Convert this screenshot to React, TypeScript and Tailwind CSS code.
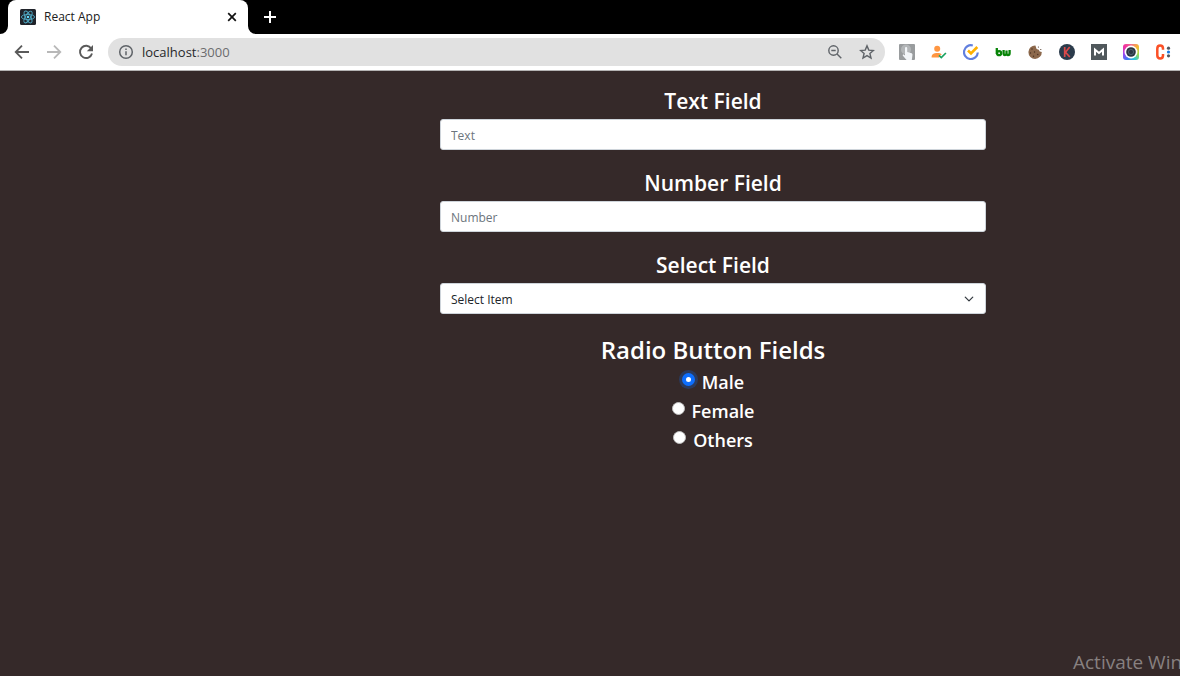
import { useState } from "react";

function ReactIcon() {
  return (
    <svg className="size-4 shrink-0" viewBox="0 0 16 16" aria-hidden="true">
      <rect width="16" height="16" rx="1.5" fill="#20232a" />
      <g fill="none" stroke="#4fa9c4" strokeWidth="0.9">
        <ellipse cx="8" cy="8" rx="6.6" ry="2.6" />
        <ellipse cx="8" cy="8" rx="6.6" ry="2.6" transform="rotate(60 8 8)" />
        <ellipse cx="8" cy="8" rx="6.6" ry="2.6" transform="rotate(120 8 8)" />
      </g>
      <circle cx="8" cy="8" r="1.3" fill="#61dafb" />
    </svg>
  );
}

function TabStrip() {
  return (
    <header className="flex h-[34px] bg-black pl-2">
      <div className="relative flex w-60 items-center rounded-t-lg bg-white pl-3 pr-2">
        <svg className="absolute bottom-0 -left-2 size-2" viewBox="0 0 8 8" aria-hidden="true">
          <path d="M8 0v8H0a8 8 0 0 0 8-8z" fill="#fff" />
        </svg>
        <svg className="absolute -right-2 bottom-0 size-2" viewBox="0 0 8 8" aria-hidden="true">
          <path d="M0 0v8h8a8 8 0 0 1-8-8z" fill="#fff" />
        </svg>
        <ReactIcon />
        <span className="ml-2 flex-1 text-xs text-[#202020]">React App</span>
        <button type="button" aria-label="Close tab" className="flex size-4 items-center justify-center">
          <svg className="size-4" viewBox="0 0 16 16" aria-hidden="true">
            <path d="M4.2 4.2l7.6 7.6M11.8 4.2l-7.6 7.6" stroke="#111" strokeWidth="1.7" />
          </svg>
        </button>
      </div>
      <button type="button" aria-label="New tab" className="ml-3 flex w-5 items-center justify-center">
        <svg className="size-4" viewBox="0 0 16 16" aria-hidden="true">
          <path d="M8 2v12M2 8h12" stroke="#fff" strokeWidth="2" />
        </svg>
      </button>
    </header>
  );
}

function Extensions() {
  return (
    <div className="flex shrink-0 items-center gap-4">
      <button type="button" aria-label="Click helper">
        <svg className="size-4" viewBox="0 0 16 16" aria-hidden="true">
          <rect width="16" height="16" rx="1" fill="#999c9e" />
          <circle cx="7" cy="5.5" r="5" fill="#b3b6b8" />
          <path d="M6 4a1.1 1.1 0 0 1 2.2 0v4l3.800 1c1 .3 1.600.8 1.500 1.800L12.800 16H7.600L3.900 11.800c-.7-1 .4-1.800 1.200-1.100l.9.8z" fill="#f2f5f8" />
        </svg>
      </button>
      <button type="button" aria-label="Contacts">
        <svg className="size-4" viewBox="0 0 16 16" aria-hidden="true">
          <circle cx="6.2" cy="4.800" r="3" fill="#ff9642" />
          <path d="M.6 13.400c0-3.100 2.400-4.300 5.600-4.300 2 0 3.600.5 4.600 1.400L8.200 12v1.400z" fill="#ff9642" />
          <path d="M8 11.400l2.300 2.200 4.600-4.600" fill="none" stroke="#1ba261" strokeWidth="1.700" />
        </svg>
      </button>
      <button type="button" aria-label="Tasks">
        <svg className="size-4" viewBox="0 0 16 16" aria-hidden="true">
          <path d="M9.800 1.500A6.900 6.900 0 1 0 14.800 8.500" fill="none" stroke="#617fde" strokeWidth="2.200" />
          <path d="M5 6.500l3 3 6.300-6.500" fill="none" stroke="#ffb000" strokeWidth="2.600" />
        </svg>
      </button>
      <button type="button" aria-label="BuiltWith">
        <svg className="size-4" viewBox="0 0 16 16" fill="none" stroke="#078407" strokeWidth="2.300" aria-hidden="true">
          <path d="M1.800 4v6" />
          <circle cx="4.100" cy="9.200" r="2" />
          <path d="M8.600 6v3.300q0 1.700 1.400 1.700t1.500-1.700V6.500v3q0 1.500 1.500 1.500 1.600 0 1.600-1.800V6" />
        </svg>
      </button>
      <button type="button" aria-label="Cookies">
        <svg className="size-4" viewBox="0 0 16 16" aria-hidden="true">
          <path d="M8.400 1.500A6.700 6.700 0 1 0 14.800 8l-2.100-.4-.9-1.900-2.200-.7z" fill="#8c684b" />
          <g fill="#4a3020">
            <circle cx="5" cy="5" r=".7" />
            <circle cx="3.500" cy="9" r=".7" />
            <circle cx="7.500" cy="8" r=".7" />
            <circle cx="6.500" cy="12.300" r=".7" />
            <circle cx="10.800" cy="10.500" r=".7" />
            <circle cx="11.400" cy="3" r=".6" />
            <circle cx="13.800" cy="5.500" r=".6" />
          </g>
        </svg>
      </button>
      <button type="button" aria-label="Keywords">
        <svg className="size-4" viewBox="0 0 16 16" aria-hidden="true">
          <circle cx="8" cy="8" r="8" fill="#2b3b4b" />
          <path d="M5.700 3v10M10.700 3L6.500 8.200l4.300 4.800" fill="none" stroke="#dc4a4a" strokeWidth="1.700" />
        </svg>
      </button>
      <button type="button" aria-label="Mail">
        <svg className="size-4" viewBox="0 0 16 16" aria-hidden="true">
          <rect width="16" height="16" fill="#50585c" />
          <path d="M4 11.500V5.700L8 9l4-3.300v5.800" fill="none" stroke="#fff" strokeWidth="2" />
        </svg>
      </button>
      <button type="button" aria-label="Camera">
        <span className="flex size-4 items-center justify-center rounded-[3px] bg-[conic-gradient(from_0deg,#f36c8e,#f7b733,#a8d94a,#2bc9d8,#3d7bf5,#a044f0,#f02fa0,#f36c8e)]">
          <svg className="size-4" viewBox="0 0 16 16" aria-hidden="true">
            <circle cx="8" cy="8" r="6.500" fill="#fff" />
            <circle cx="8" cy="8" r="4.800" fill="#2b3642" />
            <circle cx="8" cy="8" r="2.600" fill="none" stroke="#56697a" strokeWidth=".8" />
          </svg>
        </span>
      </button>
      <button type="button" aria-label="Clips">
        <svg className="size-4" viewBox="0 0 16 16" aria-hidden="true">
          <path d="M8 5.800V4.600Q8 1.600 5.200 1.600 2.300 1.600 2.300 4.800v6.400q0 3.200 2.900 3.200 2.800 0 2.800-3V10" fill="none" stroke="#fb5026" strokeWidth="2.500" />
          <circle cx="13.500" cy="4.200" r="1.600" fill="#50565e" />
          <circle cx="13.500" cy="8" r="1.600" fill="#1778e0" />
          <circle cx="13.500" cy="11.800" r="1.600" fill="#50565e" />
        </svg>
      </button>
    </div>
  );
}

function Toolbar() {
  return (
    <nav className="flex h-[37px] items-center border-b border-[#b5b3b3] bg-white pl-3 pr-[9px]">
      <div className="flex shrink-0 items-center gap-3">
        <button type="button" aria-label="Back">
          <svg className="size-5" viewBox="0 0 20 20" fill="none" stroke="#5a5a5a" strokeWidth="1.8" aria-hidden="true">
            <path d="M17 10H4M10 3.700L3.700 10l6.300 6.300" />
          </svg>
        </button>
        <button type="button" aria-label="Forward">
          <svg className="size-5" viewBox="0 0 20 20" fill="none" stroke="#b8b8b8" strokeWidth="1.8" aria-hidden="true">
            <path d="M3 10h13M10 3.700l6.300 6.300-6.300 6.300" />
          </svg>
        </button>
        <button type="button" aria-label="Reload">
          <svg className="size-5" viewBox="0 0 20 20" aria-hidden="true">
            <path d="M15.200 6.500A6.100 6.100 0 1 0 16 11.500" fill="none" stroke="#5a5a5a" strokeWidth="1.900" />
            <path d="M17 3v6.200h-6.200z" fill="#5a5a5a" />
          </svg>
        </button>
      </div>
      <div className="ml-3 flex h-7 flex-1 items-center rounded-full bg-[#e1e1e1] px-[10px]">
        <svg className="size-4" viewBox="0 0 16 16" fill="none" stroke="#5f6368" strokeWidth="1.500" aria-hidden="true">
          <circle cx="8" cy="8" r="6.300" />
          <path d="M8 7.200v4M8 4.500V6" />
        </svg>
        <span className="ml-2 flex-1 pt-px text-[13px] text-[#27282a]">
          localhost<span className="text-[#6b6c6e]">:3000</span>
        </span>
        <button type="button" aria-label="Zoom">
          <svg className="size-4" viewBox="0 0 16 16" fill="none" stroke="#5f6368" strokeWidth="1.400" aria-hidden="true">
            <circle cx="6.500" cy="6.500" r="4.700" />
            <path d="M10 10l4.300 4.300M4.300 6.500h4.400" />
          </svg>
        </button>
        <button type="button" aria-label="Bookmark this page" className="ml-4">
          <svg className="size-4" viewBox="0 0 16 16" fill="none" stroke="#5f6368" strokeWidth="1.400" aria-hidden="true">
            <path d="M8 1.900l1.800 4.200 4.600.4-3.500 3 1.100 4.500L8 11.600 4 14l1.100-4.500-3.500-3 4.600-.4z" />
          </svg>
        </button>
      </div>
      <div className="ml-[14px] flex">
        <Extensions />
      </div>
    </nav>
  );
}

const groupClass = "mb-[18px] flex flex-col gap-[2px]";
const labelClass = "text-[21px] leading-[31px] font-semibold";
const fieldClass =
  "h-[31px] w-full appearance-none rounded-[3px] border border-[#ced4da] bg-white px-[10px] pt-[2px] text-[12px] text-[#212529] outline-none placeholder:text-[#6c757d]";

export default function App() {
  const [choice, setChoice] = useState("Male");
  return (
    <div className="flex min-h-screen flex-col overflow-hidden bg-[#352929] font-['Open_Sans','Noto_Sans',sans-serif]">
      <TabStrip />
      <Toolbar />
      <main className="flex flex-1 flex-col">
        <form className="mr-[194px] ml-[440px] flex flex-1 flex-col pt-[15px] text-center text-white">
          <div className={groupClass}>
            <label htmlFor="text" className={labelClass}>Text Field</label>
            <input id="text" type="text" placeholder="Text" className={fieldClass} />
          </div>
          <div className={groupClass}>
            <label htmlFor="number" className={labelClass}>Number Field</label>
            <input id="number" type="number" placeholder="Number" className={fieldClass} />
          </div>
          <div className={groupClass}>
            <label htmlFor="item" className={labelClass}>Select Field</label>
            <div className="relative flex">
              <select id="item" className={fieldClass}>
                <option>Select Item</option>
              </select>
              <svg className="pointer-events-none absolute top-[11px] right-3 size-[10px]" viewBox="0 0 16 16" fill="none" stroke="#343a40" strokeWidth="2" strokeLinecap="round" strokeLinejoin="round" aria-hidden="true">
                <path d="M2 5l6 6 6-6" />
              </svg>
            </div>
          </div>
          <fieldset>
            <legend className="w-full text-2xl leading-[35px] font-semibold">Radio Button Fields</legend>
            {["Male", "Female", "Others"].map((name) => (
              <label key={name} className="flex h-[29px] items-center justify-center gap-[7px] text-lg font-semibold">
                <input
                  type="radio"
                  name="gender"
                  value={name}
                  checked={choice === name}
                  onChange={() => setChoice(name)}
                  className="mb-1 size-[13px] appearance-none rounded-full border border-[#bfbfbf] bg-white checked:border-4 checked:border-[#0d6efd] checked:ring-3 checked:ring-[#0d6efd]/25"
                />
                {name}
              </label>
            ))}
          </fieldset>
        </form>
        <aside className="flex h-7 justify-end overflow-hidden">
          <p className="w-[107px] text-[19px] leading-7 whitespace-nowrap text-[#878080]">Activate Windows</p>
        </aside>
      </main>
    </div>
  );
}
